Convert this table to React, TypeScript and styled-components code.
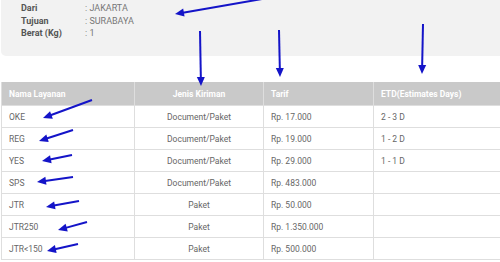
import styled, { createGlobalStyle } from "styled-components";

const Global = createGlobalStyle`
  html, body {
    margin: 0;
    padding: 0;
    background: #fff;
    overflow: hidden;
  }
  body {
    font-family: Roboto, "Liberation Sans", Arial, sans-serif;
  }
`;

const Page = styled.div`
  position: relative;
  width: 500px;
  height: 262px;
  overflow: hidden;
`;

const Summary = styled.div`
  margin-left: 1px;
  height: 56px;
  box-sizing: border-box;
  padding: 2px 0 0 20px;
  background: #f2f2f2;
  border-bottom-left-radius: 5px;
`;

const InfoRow = styled.div`
  display: flex;
  height: 12.5px;
  align-items: center;
  font-size: 9px;
`;

const Label = styled.span`
  width: 64px;
  font-weight: 700;
  color: #555;
`;

const Value = styled.span`
  color: #777;
`;

const Table = styled.table`
  margin: 26px 0 0 1px;
  width: 540px;
  border-collapse: collapse;
  table-layout: fixed;
  font-size: 8.5px;
`;

const Th = styled.th<{ $center?: boolean }>`
  height: 23px;
  padding: 0 7px;
  background: #c9c9c9;
  color: #fff;
  font-weight: 700;
  text-align: ${(p) => (p.$center ? "center" : "left")};
  border: 1px solid #dedede;
  border-top: none;
`;

const Td = styled.td<{ $center?: boolean }>`
  height: 21px;
  padding: 0 7px;
  color: #666;
  text-align: ${(p) => (p.$center ? "center" : "left")};
  border: 1px solid #dedede;
`;

const Overlay = styled.svg`
  position: absolute;
  left: 0;
  top: 0;
  pointer-events: none;
`;

const info = [
  ["Dari", ": JAKARTA"],
  ["Tujuan", ": SURABAYA"],
  ["Berat (Kg)", ": 1"],
];

const rows = [
  ["OKE", "Document/Paket", "Rp. 17.000", "2 - 3 D"],
  ["REG", "Document/Paket", "Rp. 19.000", "1 - 2 D"],
  ["YES", "Document/Paket", "Rp. 29.000", "1 - 1 D"],
  ["SPS", "Document/Paket", "Rp. 483.000", ""],
  ["JTR", "Paket", "Rp. 50.000", ""],
  ["JTR250", "Paket", "Rp. 1.350.000", ""],
  ["JTR<150", "Paket", "Rp. 500.000", ""],
];

// annotation arrows: [x1, y1, tipX, tipY]
const arrows: [number, number, number, number][] = [
  [262, -1, 175, 14],
  [200, 31, 201, 86],
  [279, 30, 280, 77],
  [423, 24, 422, 74],
  [92, 100, 43, 118],
  [73, 130, 39, 141],
  [72, 155, 42, 161],
  [73, 177, 37, 182],
  [79, 201, 46, 207],
  [87, 222, 58, 230],
  [78, 244, 47, 251],
];

function Arrow({ a }: { a: [number, number, number, number] }) {
  const [x1, y1, x2, y2] = a;
  const dx = x2 - x1;
  const dy = y2 - y1;
  const len = Math.hypot(dx, dy);
  const ux = dx / len;
  const uy = dy / len;
  const hl = 9;
  const hw = 4;
  const bx = x2 - ux * hl;
  const by = y2 - uy * hl;
  const pts = `${x2},${y2} ${bx - uy * hw},${by + ux * hw} ${bx + uy * hw},${by - ux * hw}`;
  return (
    <g>
      <line x1={x1} y1={y1} x2={bx + ux} y2={by + uy} stroke="#1414c8" strokeWidth={2} />
      <polygon points={pts} fill="#1414c8" />
    </g>
  );
}

export default function App() {
  return (
    <Page>
      <Global />
      <Summary>
        {info.map(([l, v]) => (
          <InfoRow key={l}>
            <Label>{l}</Label>
            <Value>{v}</Value>
          </InfoRow>
        ))}
      </Summary>
      <Table>
        <colgroup>
          <col style={{ width: 133 }} />
          <col style={{ width: 129 }} />
          <col style={{ width: 110 }} />
          <col style={{ width: 168 }} />
        </colgroup>
        <thead>
          <tr>
            <Th>Nama Layanan</Th>
            <Th $center>Jenis Kiriman</Th>
            <Th>Tarif</Th>
            <Th>ETD(Estimates Days)</Th>
          </tr>
        </thead>
        <tbody>
          {rows.map((r) => (
            <tr key={r[0]}>
              <Td>{r[0]}</Td>
              <Td $center>{r[1]}</Td>
              <Td>{r[2]}</Td>
              <Td>{r[3]}</Td>
            </tr>
          ))}
        </tbody>
      </Table>
      <Overlay width={500} height={262}>
        {arrows.map((a, i) => (
          <Arrow key={i} a={a} />
        ))}
      </Overlay>
    </Page>
  );
}
